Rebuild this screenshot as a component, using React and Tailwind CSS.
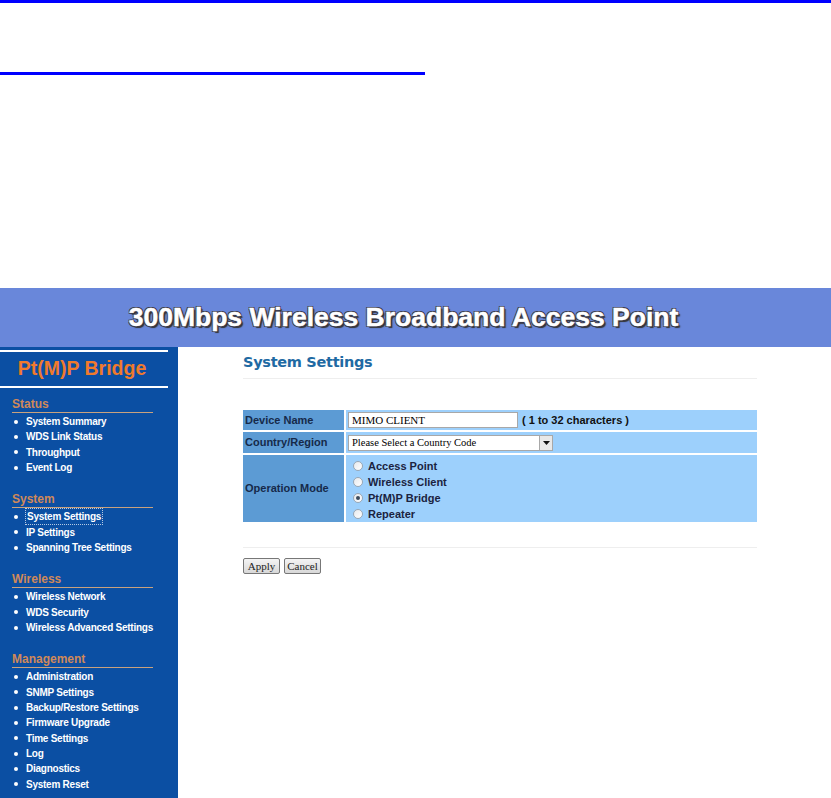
const sections = [
  { title: 'Status', items: ['System Summary', 'WDS Link Status', 'Throughput', 'Event Log'] },
  { title: 'System', items: ['System Settings', 'IP Settings', 'Spanning Tree Settings'] },
  { title: 'Wireless', items: ['Wireless Network', 'WDS Security', 'Wireless Advanced Settings'] },
  {
    title: 'Management',
    items: [
      'Administration',
      'SNMP Settings',
      'Backup/Restore Settings',
      'Firmware Upgrade',
      'Time Settings',
      'Log',
      'Diagnostics',
      'System Reset',
    ],
  },
];

const modes = ['Access Point', 'Wireless Client', 'Pt(M)P Bridge', 'Repeater'];

function Radio({ checked }) {
  return (
    <span className="relative inline-block w-[10px] h-[10px] rounded-full border border-[#9aa7b4] bg-[linear-gradient(135deg,#e6e9ec,#ffffff)]">
      {checked && <span className="absolute left-[2px] top-[2px] w-[4px] h-[4px] rounded-full bg-[#3b4b5c]" />}
    </span>
  );
}

function Sidebar() {
  return (
    <div className="w-[178px] shrink-0 bg-[#0b4fa3] pt-[3px] pb-[20px] font-['Liberation_Sans',Arial,sans-serif]">
      <div className="h-[2px] w-[168px] bg-white" />
      <div className="h-[34px] flex items-center justify-center pr-[14px] text-[19.5px] font-bold text-[#f07a2c] leading-none">
        Pt(M)P Bridge
      </div>
      <div className="h-[2px] w-[168px] bg-white" />
      <div className="pt-[9px]">
        {sections.map((s) => (
          <div key={s.title} className="mb-[17px]">
            <div className="ml-[12px] w-[141px] border-b border-[#c9a27e] text-[12px] font-bold text-[#d0895a] leading-[14px] pb-[1px] mb-[1px]">
              {s.title}
            </div>
            <ul>
              {s.items.map((it) => (
                <li key={it} className="flex items-center h-[15.33px] pl-[14px] text-[10px] font-bold text-white tracking-[-0.25px]">
                  <span className="w-[4px] h-[4px] rounded-full bg-white mr-[8px]" />
                  <span className={it === 'System Settings' ? 'outline-1 outline-dotted outline-white/70 px-[1px]' : ''}>{it}</span>
                </li>
              ))}
            </ul>
          </div>
        ))}
      </div>
    </div>
  );
}

export default function App() {
  return (
    <div className="w-[831px] bg-white font-['Liberation_Sans',Arial,sans-serif] overflow-hidden">
      <div className="h-[3px] bg-[#0000ff]" />
      <div className="h-[69px]" />
      <div className="h-[3px] w-[425px] bg-[#0000ff]" />
      <div className="h-[213px]" />
      <div className="h-[59px] bg-[#6987da] flex items-center justify-center pr-[24px]">
        <span className="text-[26.5px] font-bold text-white [-webkit-text-stroke:0.5px_white] [text-shadow:1px_1px_0_#3a3a4a,-1px_-1px_0_#3a3a4a,1px_-1px_0_#3a3a4a,-1px_1px_0_#3a3a4a,2px_2px_1px_#333]">
          300Mbps Wireless Broadband Access Point
        </span>
      </div>
      <div className="flex">
        <Sidebar />
        <div className="flex-1 pl-[65px] pt-[5px]">
          <div className="w-[514px]">
            <h1 className="text-[14.5px] font-bold text-[#1f6aa3] leading-[20px] h-[26px] font-['DejaVu_Sans',Verdana,sans-serif] tracking-[-0.3px]">
              System Settings
            </h1>
            <div className="h-[1px] bg-[#eeeeee]" />
            <div className="h-[31px]" />
            <div className="text-[11px] font-bold">
              <div className="flex h-[22px] border-b-2 border-white">
                <div className="w-[103px] bg-[#5c9bd4] text-[#162a4a] flex items-center pl-[2px] border-r-2 border-white">Device Name</div>
                <div className="flex-1 bg-[#9dd0fc] flex items-center pl-[2px]">
                  <div className="w-[170px] h-[16px] bg-white border border-[#a8a8a8] font-['Liberation_Serif',serif] font-normal text-[11px] text-black leading-[14px] pl-[3px]">
                    MIMO CLIENT
                  </div>
                  <span className="ml-[4px] text-[#111]">( 1 to 32 characters )</span>
                </div>
              </div>
              <div className="flex h-[23px] border-b-2 border-white">
                <div className="w-[103px] bg-[#5c9bd4] text-[#162a4a] flex items-center pl-[2px] border-r-2 border-white">Country/Region</div>
                <div className="flex-1 bg-[#9dd0fc] flex items-center pl-[2px]">
                  <div className="w-[205px] h-[16px] bg-white border border-[#a8a8a8] flex items-center font-['Liberation_Serif',serif] font-normal text-[10.5px] text-black">
                    <span className="flex-1 pl-[3px]">Please Select a Country Code</span>
                    <span className="w-[13px] h-[14px] border-l border-[#a8a8a8] bg-[#e8e8e8] flex items-center justify-center">
                      <svg width="7" height="4" viewBox="0 0 7 4"><path d="M0 0h7L3.5 4z" fill="#111" /></svg>
                    </span>
                  </div>
                </div>
              </div>
              <div className="flex h-[67px]">
                <div className="w-[103px] bg-[#5c9bd4] text-[#162a4a] flex items-center pl-[2px] border-r-2 border-white">Operation Mode</div>
                <div className="flex-1 bg-[#9dd0fc] pl-[7px] pt-[3px]">
                  {modes.map((m) => (
                    <div key={m} className="flex items-center h-[16px] text-[#1b2340]">
                      <Radio checked={m === 'Pt(M)P Bridge'} />
                      <span className="ml-[5px]">{m}</span>
                    </div>
                  ))}
                </div>
              </div>
            </div>
            <div className="h-[25px]" />
            <div className="h-[1px] bg-[#eeeeee]" />
            <div className="flex gap-[4px] mt-[10px] font-['Liberation_Serif',serif] text-[11px]">
              <button className="w-[37px] h-[16px] border border-[#777] rounded-[2px] bg-[linear-gradient(#f4f4f4,#d8d8d8)] leading-[14px] text-[#222]">Apply</button>
              <button className="w-[37px] h-[16px] border border-[#777] rounded-[2px] bg-[linear-gradient(#f4f4f4,#d8d8d8)] leading-[14px] text-[#222]">Cancel</button>
            </div>
          </div>
        </div>
      </div>
    </div>
  );
}
